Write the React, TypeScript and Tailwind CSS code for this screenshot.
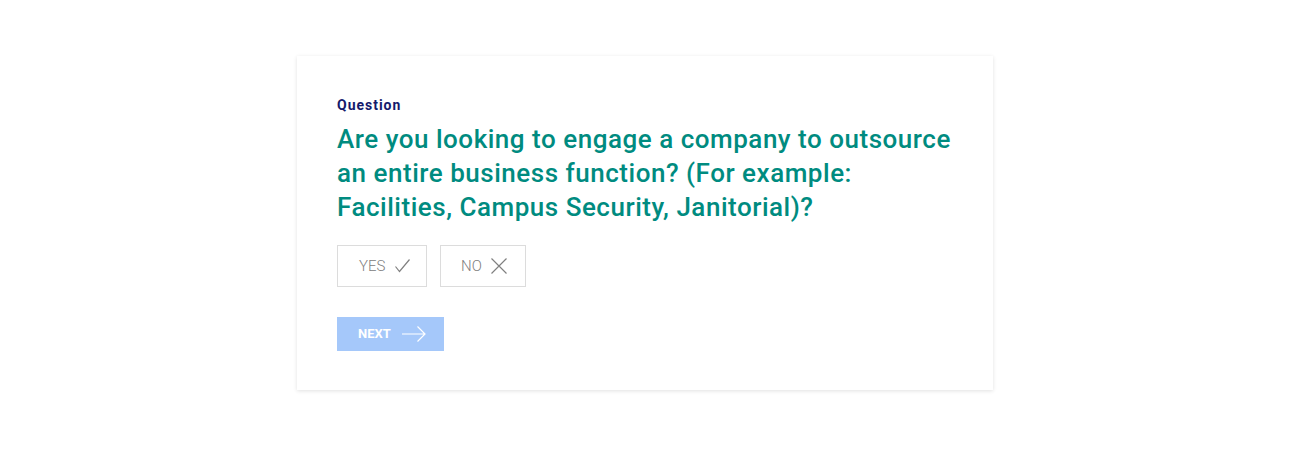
const CheckMark = () => (
  <svg width="15" height="14" viewBox="0 0 15 14" fill="none" stroke="currentColor" strokeWidth="1.2">
    <path d="M0.5 7.5 L4.5 12.5 L14.5 0.5" />
  </svg>
);

const Cross = () => (
  <svg width="16" height="16" viewBox="0 0 16 16" fill="none" stroke="currentColor" strokeWidth="1.2">
    <path d="M0.5 0.5 L15.5 15.5 M15.5 0.5 L0.5 15.5" />
  </svg>
);

const LongArrow = () => (
  <svg width="24" height="16" viewBox="0 0 24 16" fill="none" stroke="currentColor" strokeWidth="1.2">
    <path d="M0 8 H23 M15.5 0.5 L23 8 L15.5 15.5" />
  </svg>
);

const App = () => {
  return (
    <div className="flex min-h-screen justify-center bg-white pt-[56px] pr-[1px] font-['Roboto',sans-serif]">
      <div className="h-fit w-[696px] bg-white px-10 pt-[41px] pb-[39px] shadow-[0_1px_4px_rgba(0,0,0,0.12)]">
        <p className="text-[14px] font-bold leading-[16px] tracking-[0.07em] text-[#141a6b]">Question</p>
        <h1 className="mt-[9px] text-[26px] font-medium leading-[34px] tracking-[0.02em] text-[#008b80]">
          Are you looking to engage a company to outsource an entire business function? (For example: Facilities, Campus Security, Janitorial)?
        </h1>
        <div className="mt-[21px] flex gap-[13px]">
          <button className="flex h-[42px] w-[90px] items-center gap-[10px] border border-[#dcdcdc] bg-white pl-[21px] text-[15px] font-light text-[#808080]">
            YES
            <CheckMark />
          </button>
          <button className="flex h-[42px] w-[86px] items-center gap-[9px] border border-[#dcdcdc] bg-white pl-[20px] text-[15px] font-light text-[#808080]">
            NO
            <Cross />
          </button>
        </div>
        <button className="mt-[30px] flex h-[34px] w-[107px] items-center gap-[11px] bg-[#a5c8fa] pl-[21px] text-[13px] font-bold text-white">
          NEXT
          <LongArrow />
        </button>
      </div>
    </div>
  );
};

export default App;
